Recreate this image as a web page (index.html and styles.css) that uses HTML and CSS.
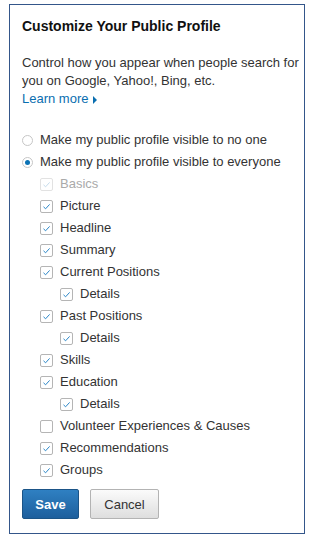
FILE: index.html
```html
<!DOCTYPE html>
<html>
<head>
<meta charset="utf-8">
<link rel="stylesheet" href="styles.css">
</head>
<body>
<div class="card">
  <h1 class="title">Customize Your Public Profile</h1>
  <p class="intro">Control how you appear when people search for you on Google, Yahoo!, Bing, etc.<br><a class="learn" href="#">Learn more<span class="tri"></span></a></p>
  <ul class="opts">
    <li class="row"><span class="radio"></span>Make my public profile visible to no one</li>
    <li class="row"><span class="radio on"></span>Make my public profile visible to everyone</li>
    <li class="row l1 dis"><span class="box"><svg viewBox="0 0 13 13"><polyline points="3.5,6.8 5.6,8.8 9.6,4.4"/></svg></span>Basics</li>
    <li class="row l1"><span class="box"><svg viewBox="0 0 13 13"><polyline points="3.5,6.8 5.6,8.8 9.6,4.4"/></svg></span>Picture</li>
    <li class="row l1"><span class="box"><svg viewBox="0 0 13 13"><polyline points="3.5,6.8 5.6,8.8 9.6,4.4"/></svg></span>Headline</li>
    <li class="row l1"><span class="box"><svg viewBox="0 0 13 13"><polyline points="3.5,6.8 5.6,8.8 9.6,4.4"/></svg></span>Summary</li>
    <li class="row l1"><span class="box"><svg viewBox="0 0 13 13"><polyline points="3.5,6.8 5.6,8.8 9.6,4.4"/></svg></span>Current Positions</li>
    <li class="row l2"><span class="box"><svg viewBox="0 0 13 13"><polyline points="3.5,6.8 5.6,8.8 9.6,4.4"/></svg></span>Details</li>
    <li class="row l1"><span class="box"><svg viewBox="0 0 13 13"><polyline points="3.5,6.8 5.6,8.8 9.6,4.4"/></svg></span>Past Positions</li>
    <li class="row l2"><span class="box"><svg viewBox="0 0 13 13"><polyline points="3.5,6.8 5.6,8.8 9.6,4.4"/></svg></span>Details</li>
    <li class="row l1"><span class="box"><svg viewBox="0 0 13 13"><polyline points="3.5,6.8 5.6,8.8 9.6,4.4"/></svg></span>Skills</li>
    <li class="row l1"><span class="box"><svg viewBox="0 0 13 13"><polyline points="3.5,6.8 5.6,8.8 9.6,4.4"/></svg></span>Education</li>
    <li class="row l2"><span class="box"><svg viewBox="0 0 13 13"><polyline points="3.5,6.8 5.6,8.8 9.6,4.4"/></svg></span>Details</li>
    <li class="row l1"><span class="box"></span>Volunteer Experiences &amp; Causes</li>
    <li class="row l1"><span class="box"><svg viewBox="0 0 13 13"><polyline points="3.5,6.8 5.6,8.8 9.6,4.4"/></svg></span>Recommendations</li>
    <li class="row l1"><span class="box"><svg viewBox="0 0 13 13"><polyline points="3.5,6.8 5.6,8.8 9.6,4.4"/></svg></span>Groups</li>
  </ul>
  <div class="actions">
    <button class="btn save">Save</button>
    <button class="btn cancel">Cancel</button>
  </div>
</div>
</body>
</html>
```
FILE: styles.css
```css
html, body {
  margin: 0;
  padding: 0;
  background: #fff;
}
body {
  font-family: "Liberation Sans", Arial, sans-serif;
  font-size: 13px;
  color: #333;
}
.card {
  box-sizing: border-box;
  width: 296px;
  height: 530px;
  margin: 4px 0 0 9px;
  border: 1px solid #34568a;
  padding: 12px 2px 0 12px;
}
.title {
  margin: 0;
  font-size: 14px;
  font-weight: bold;
  line-height: 18px;
  color: #111;
}
.intro {
  margin: 19px 0 0 0;
  line-height: 18px;
}
.learn {
  color: #0a6eb0;
  text-decoration: none;
  display: inline-flex;
  align-items: center;
}
.tri {
  display: inline-block;
  width: 0;
  height: 0;
  margin-left: 5px;
  margin-top: 1px;
  border-top: 4px solid transparent;
  border-bottom: 4px solid transparent;
  border-left: 4px solid #0a6eb0;
}
.opts {
  list-style: none;
  margin: 21px 0 0 0;
  padding: 0;
}
.row {
  display: flex;
  align-items: center;
  height: 22px;
  line-height: 22px;
  white-space: nowrap;
}
.radio {
  box-sizing: border-box;
  flex: none;
  width: 11px;
  height: 11px;
  border: 1px solid #c6c6c6;
  border-radius: 50%;
  margin-right: 7px;
  position: relative;
  background: #fff;
}
.radio.on::after {
  content: "";
  position: absolute;
  left: 2px;
  top: 2px;
  width: 5px;
  height: 5px;
  border-radius: 50%;
  background: #0b72b5;
}
.l1 { padding-left: 18px; }
.l2 { padding-left: 38px; }
.box {
  box-sizing: border-box;
  flex: none;
  width: 13px;
  height: 13px;
  border: 1px solid #b5b5b5;
  border-radius: 2px;
  margin-right: 7px;
  background: #fff;
  display: flex;
}
.box svg {
  transform: translate(-1px, -1px);
  width: 13px;
  height: 13px;
  flex: none;
}
.box svg polyline {
  fill: none;
  stroke: #2a86c8;
  stroke-width: 1;
}
.dis { color: #aaa; }
.dis .box { border-color: #e2e2e2; }
.dis .box svg polyline { stroke: #c5dcec; }
.actions {
  display: flex;
  gap: 11px;
  margin-top: 8px;
}
.btn {
  box-sizing: border-box;
  height: 30px;
  font-family: "Liberation Sans", Arial, sans-serif;
  font-size: 13px;
  border-radius: 2px;
  padding: 0;
  cursor: pointer;
}
.save {
  width: 57px;
  color: #fff;
  font-weight: bold;
  border: 1px solid #1b5487;
  background: linear-gradient(#2f80c2, #1d5f9d);
}
.cancel {
  width: 69px;
  color: #333;
  border: 1px solid #b3b3b3;
  background: linear-gradient(#fbfbfb, #dedede);
}
```
